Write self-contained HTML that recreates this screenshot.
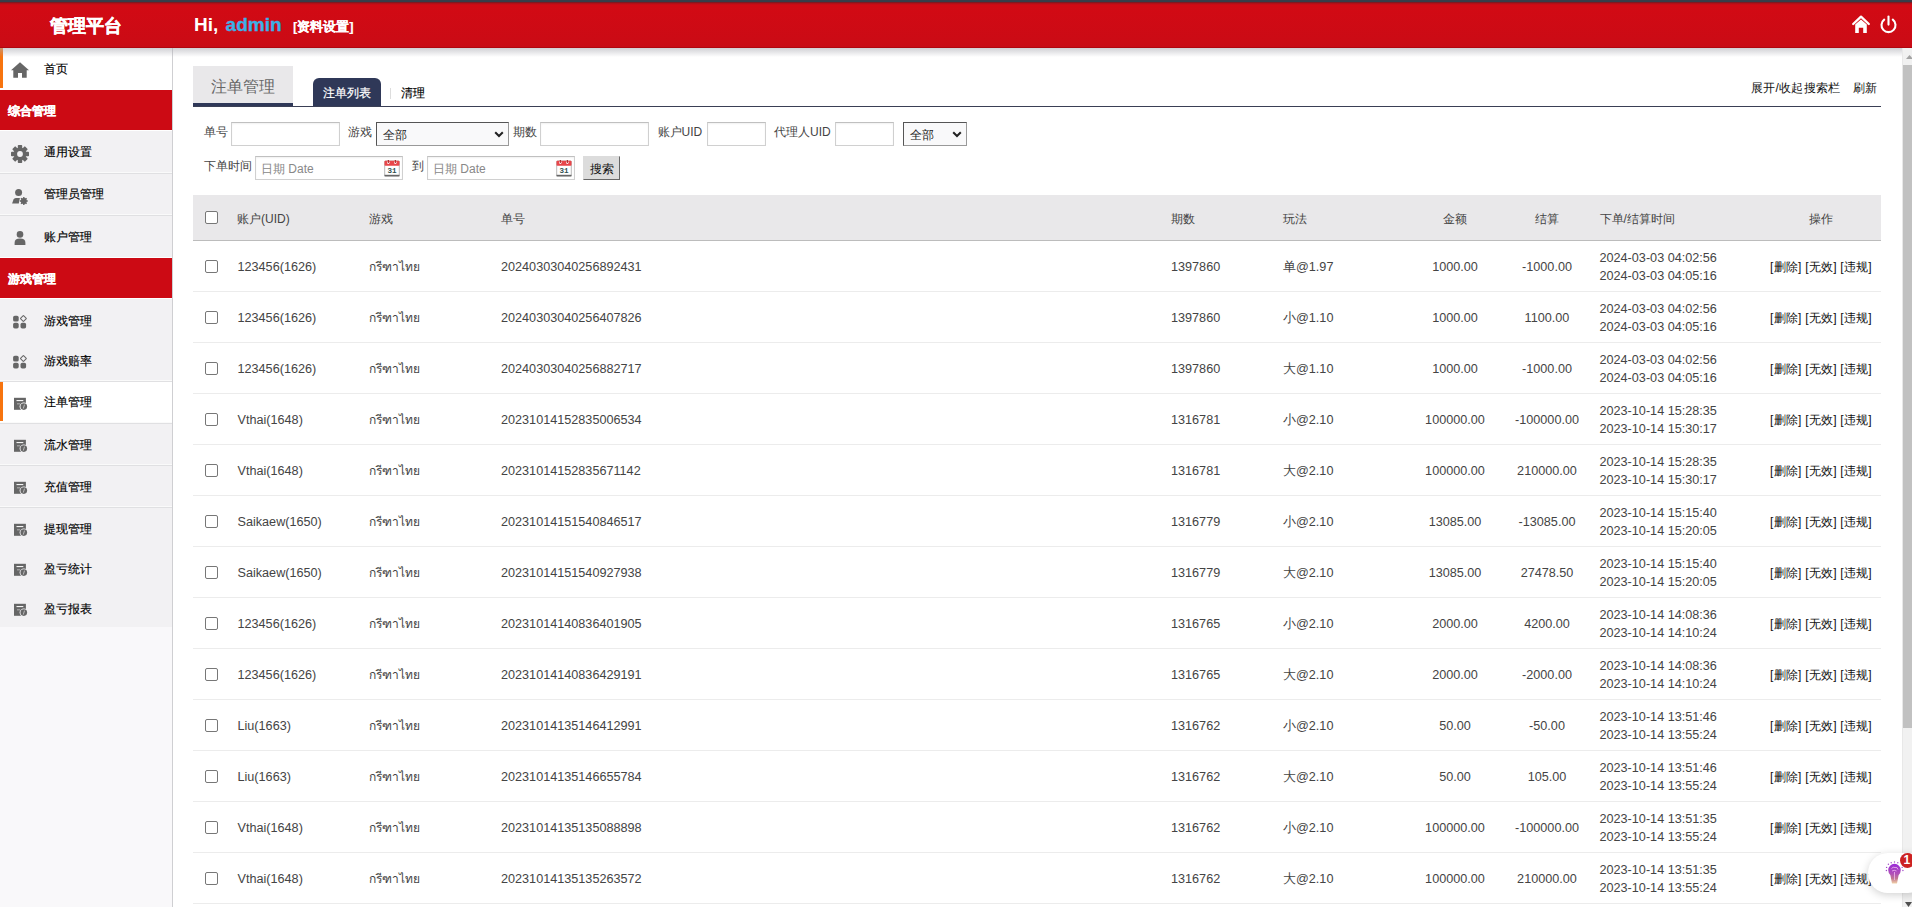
<!DOCTYPE html>
<html><head><meta charset="utf-8">
<style>
*{box-sizing:border-box;margin:0;padding:0}
html,body{width:1912px;height:907px;overflow:hidden;background:#fff}
body{font-family:"Liberation Sans",sans-serif;color:#333;position:relative}
.abs{position:absolute}
.t{position:absolute;white-space:nowrap;line-height:14px}
.side{font-size:12px;color:#000;-webkit-text-stroke:0.15px #000}
.sh{font-size:12px;font-weight:bold;color:#fff;-webkit-text-stroke:0.3px #fff}
.lbl{font-size:12px;color:#444}
.inp{position:absolute;border:1px solid #d0d0d0;border-top-color:#c0c0c0;background:#fff;box-shadow:inset 0 1px 2px rgba(0,0,0,0.06)}
.sel{position:absolute;border:1px solid #999;border-top-color:#555;border-left-color:#555;background:#f9f9fa}
.cell{font-size:12.65px;color:#444}
.hcell{font-size:12px;color:#444}
.cb{position:absolute;width:13px;height:13px;border:1px solid #777;border-radius:2px;background:#fff}
.rl{position:absolute;left:193px;width:1688px;height:1px;background:#ececec}
.ops{font-size:12px;letter-spacing:0.22px;color:#111}
</style></head><body>

<div class="abs" style="left:0;top:0;width:1912px;height:3px;background:#383d49"></div>
<div class="abs" style="left:0;top:2px;width:1912px;height:46px;background:linear-gradient(#6a1c24 0px,#b01018 1.5px,#d20a14 3px,#cb0b15 40px,#c70b16 46px)"></div>
<div class="t" style="left:50px;top:15px;font-size:18px;line-height:22px;font-weight:bold;color:#fff;-webkit-text-stroke:0.4px #fff">管理平台</div>
<div class="t" style="left:194px;top:13px;font-size:19px;line-height:24px;font-weight:bold;color:#fff">Hi, <span style="color:#3cb0e6;margin-left:2px;-webkit-text-stroke:0.35px #3cb0e6">admin</span></div>
<div class="t" style="left:293px;top:19px;font-size:13px;line-height:16px;font-weight:bold;color:#fff;-webkit-text-stroke:0.12px #fff">[资料设置]</div>
<svg class="abs" style="left:1851px;top:15px" width="20" height="19" viewBox="0 0 20 19"><path d="M2.2 9 L10 1.6 L17.8 9" fill="none" stroke="#fff" stroke-width="2.3" stroke-linecap="round" stroke-linejoin="round"/><path d="M4.2 9.6 L10 4.4 L15.8 9.6 V18 H12.2 V12.8 H7.8 V18 H4.2 Z" fill="#fff"/></svg>
<svg class="abs" style="left:1879px;top:15px" width="19" height="19" viewBox="0 0 19 19"><path d="M5.2 4.6 A7 7 0 1 0 13.8 4.6" fill="none" stroke="#fff" stroke-width="2.1" stroke-linecap="round"/><path d="M9.5 1.6 V9.6" stroke="#fff" stroke-width="2.1" stroke-linecap="round"/></svg>
<div class="abs" style="left:0;top:48px;width:173px;height:859px;background:#f9f8fa;border-right:1px solid #cfcfd2"></div>
<div class="abs" style="left:0;top:48px;width:172px;height:42px;background:#fff"></div>
<div class="abs" style="left:0;top:48px;width:3px;height:40px;background:#f7740f"></div>
<div class="t side" style="left:44px;top:61.5px">首页</div>
<div class="abs" style="left:0;top:89px;width:172px;height:1px;background:#fff"></div>
<div class="abs" style="left:0;top:90px;width:172px;height:40px;background:#cc0a14"></div>
<div class="abs" style="left:0;top:130px;width:172px;height:1px;background:#fff"></div>
<div class="t sh" style="left:8px;top:103.5px">综合管理</div>
<div class="abs" style="left:0;top:131px;width:172px;height:42px;background:#f2f1f3"></div>
<div class="abs" style="left:0;top:172px;width:172px;height:1px;background:#fafafa"></div>
<div class="abs" style="left:0;top:173px;width:172px;height:1px;background:#e0e0e2"></div>
<div class="t side" style="left:44px;top:145.4px">通用设置</div>
<div class="abs" style="left:0;top:174px;width:172px;height:41px;background:#f2f1f3"></div>
<div class="abs" style="left:0;top:214px;width:172px;height:1px;background:#fafafa"></div>
<div class="abs" style="left:0;top:215px;width:172px;height:1px;background:#e0e0e2"></div>
<div class="t side" style="left:44px;top:187.4px">管理员管理</div>
<div class="abs" style="left:0;top:216px;width:172px;height:41px;background:#f2f1f3"></div>
<div class="t side" style="left:44px;top:229.7px">账户管理</div>
<div class="abs" style="left:0;top:257px;width:172px;height:1px;background:#fff"></div>
<div class="abs" style="left:0;top:258px;width:172px;height:40px;background:#cc0a14"></div>
<div class="abs" style="left:0;top:298px;width:172px;height:1px;background:#fff"></div>
<div class="t sh" style="left:8px;top:271.5px">游戏管理</div>
<div class="abs" style="left:0;top:299px;width:172px;height:41px;background:#f2f1f3"></div>
<div class="t side" style="left:44px;top:313.5px">游戏管理</div>
<div class="abs" style="left:0;top:340px;width:172px;height:41px;background:#f2f1f3"></div>
<div class="abs" style="left:0;top:380px;width:172px;height:1px;background:#fafafa"></div>
<div class="abs" style="left:0;top:381px;width:172px;height:1px;background:#e0e0e2"></div>
<div class="t side" style="left:44px;top:353.6px">游戏赔率</div>
<div class="abs" style="left:0;top:382px;width:172px;height:41px;background:#fff"></div>
<div class="abs" style="left:0;top:382px;width:3px;height:39px;background:#f7740f"></div>
<div class="abs" style="left:0;top:422px;width:172px;height:1px;background:#fafafa"></div>
<div class="abs" style="left:0;top:423px;width:172px;height:1px;background:#e0e0e2"></div>
<div class="t side" style="left:44px;top:395.0px">注单管理</div>
<div class="abs" style="left:0;top:424px;width:172px;height:41px;background:#f2f1f3"></div>
<div class="abs" style="left:0;top:464px;width:172px;height:1px;background:#fafafa"></div>
<div class="abs" style="left:0;top:465px;width:172px;height:1px;background:#e0e0e2"></div>
<div class="t side" style="left:44px;top:438.0px">流水管理</div>
<div class="abs" style="left:0;top:466px;width:172px;height:41px;background:#f2f1f3"></div>
<div class="abs" style="left:0;top:506px;width:172px;height:1px;background:#fafafa"></div>
<div class="abs" style="left:0;top:507px;width:172px;height:1px;background:#e0e0e2"></div>
<div class="t side" style="left:44px;top:480.0px">充值管理</div>
<div class="abs" style="left:0;top:508px;width:172px;height:41px;background:#f2f1f3"></div>
<div class="t side" style="left:44px;top:522.0px">提现管理</div>
<div class="abs" style="left:0;top:549px;width:172px;height:40px;background:#f2f1f3"></div>
<div class="t side" style="left:44px;top:562.0px">盈亏统计</div>
<div class="abs" style="left:0;top:589px;width:172px;height:38px;background:#f2f1f3"></div>
<div class="t side" style="left:44px;top:602.0px">盈亏报表</div>
<svg class="abs" style="left:11px;top:62px" width="18" height="16" viewBox="0 0 18 16"><path d="M9 0.3 L0 8.3 L2.3 8.3 V15.8 H7 V11 H11 V15.8 H15.7 V8.3 H18 Z" fill="#666"/></svg>
<svg class="abs" style="left:11px;top:145px" width="18" height="18" viewBox="0 0 18 18"><g fill="#666"><circle cx="9" cy="9" r="6.4"/><rect x="6.8" y="0" width="4.4" height="18" rx="0.8"/><rect x="0" y="6.8" width="18" height="4.4" rx="0.8"/><rect x="6.8" y="0" width="4.4" height="18" rx="0.8" transform="rotate(45 9 9)"/><rect x="6.8" y="0" width="4.4" height="18" rx="0.8" transform="rotate(-45 9 9)"/></g><circle cx="9" cy="9" r="2.9" fill="#f2f1f3"/></svg>
<svg class="abs" style="left:12px;top:189px" width="17" height="16" viewBox="0 0 17 16"><g fill="#666"><circle cx="6.6" cy="3.6" r="3.5"/><path d="M0.1 14.6 L1.5 10.6 Q2.1 9.1 3.9 9.1 L7.9 9.1 L6.8 14.6 Z"/><g transform="translate(11.8 12)"><circle r="2.9"/><rect x="-0.8" y="-3.9" width="1.6" height="7.8"/><rect x="-3.9" y="-0.8" width="7.8" height="1.6"/><rect x="-0.8" y="-3.9" width="1.6" height="7.8" transform="rotate(45)"/><rect x="-0.8" y="-3.9" width="1.6" height="7.8" transform="rotate(-45)"/></g></g></svg>
<svg class="abs" style="left:13.5px;top:231px" width="12" height="14" viewBox="0 0 12 14"><g fill="#666"><circle cx="6" cy="3.4" r="3.3"/><path d="M0.6 14 V11.8 Q0.6 7.6 6 7.6 Q11.4 7.6 11.4 11.8 V14 Z"/></g></svg>
<svg class="abs" style="left:13px;top:315px" width="15" height="14" viewBox="0 0 15 14"><g fill="#666"><rect x="0.1" y="0.8" width="5.6" height="5.8" rx="1.7"/><rect x="0.1" y="7.8" width="5.6" height="5.6" rx="1.7"/><rect x="7.5" y="7.8" width="5.6" height="5.6" rx="1.7"/></g><rect x="8.2" y="1.3" width="4.4" height="4.4" rx="0.6" transform="rotate(45 10.4 3.5)" fill="none" stroke="#666" stroke-width="1"/></svg>
<svg class="abs" style="left:13px;top:355px" width="15" height="14" viewBox="0 0 15 14"><g fill="#666"><rect x="0.1" y="0.8" width="5.6" height="5.8" rx="1.7"/><rect x="0.1" y="7.8" width="5.6" height="5.6" rx="1.7"/><rect x="7.5" y="7.8" width="5.6" height="5.6" rx="1.7"/></g><rect x="8.2" y="1.3" width="4.4" height="4.4" rx="0.6" transform="rotate(45 10.4 3.5)" fill="none" stroke="#666" stroke-width="1"/></svg>
<svg class="abs" style="left:14px;top:397px" width="14" height="14" viewBox="0 0 14 14"><rect x="0" y="0.8" width="11.9" height="12" fill="#666"/><rect x="2.5" y="3" width="6.8" height="1.1" fill="#f4f4f4"/><rect x="3" y="6.2" width="3" height="1.2" fill="#a8a8a8"/><circle cx="9.8" cy="9.6" r="4.2" fill="#fff"/><circle cx="9.8" cy="9.6" r="3.3" fill="#666"/><path d="M10.5 7.6 L9.3 11.6" stroke="#bdbdbd" stroke-width="1"/></svg>
<svg class="abs" style="left:14px;top:439px" width="14" height="14" viewBox="0 0 14 14"><rect x="0" y="0.8" width="11.9" height="12" fill="#666"/><rect x="2.5" y="3" width="6.8" height="1.1" fill="#f4f4f4"/><rect x="3" y="6.2" width="3" height="1.2" fill="#a8a8a8"/><circle cx="9.8" cy="9.6" r="4.2" fill="#f2f1f3"/><circle cx="9.8" cy="9.6" r="3.3" fill="#666"/><path d="M10.5 7.6 L9.3 11.6" stroke="#bdbdbd" stroke-width="1"/></svg>
<svg class="abs" style="left:14px;top:481px" width="14" height="14" viewBox="0 0 14 14"><rect x="0" y="0.8" width="11.9" height="12" fill="#666"/><rect x="2.5" y="3" width="6.8" height="1.1" fill="#f4f4f4"/><rect x="3" y="6.2" width="3" height="1.2" fill="#a8a8a8"/><circle cx="9.8" cy="9.6" r="4.2" fill="#f2f1f3"/><circle cx="9.8" cy="9.6" r="3.3" fill="#666"/><path d="M10.5 7.6 L9.3 11.6" stroke="#bdbdbd" stroke-width="1"/></svg>
<svg class="abs" style="left:14px;top:523px" width="14" height="14" viewBox="0 0 14 14"><rect x="0" y="0.8" width="11.9" height="12" fill="#666"/><rect x="2.5" y="3" width="6.8" height="1.1" fill="#f4f4f4"/><rect x="3" y="6.2" width="3" height="1.2" fill="#a8a8a8"/><circle cx="9.8" cy="9.6" r="4.2" fill="#f2f1f3"/><circle cx="9.8" cy="9.6" r="3.3" fill="#666"/><path d="M10.5 7.6 L9.3 11.6" stroke="#bdbdbd" stroke-width="1"/></svg>
<svg class="abs" style="left:14px;top:563px" width="14" height="14" viewBox="0 0 14 14"><rect x="0" y="0.8" width="11.9" height="12" fill="#666"/><rect x="2.5" y="3" width="6.8" height="1.1" fill="#f4f4f4"/><rect x="3" y="6.2" width="3" height="1.2" fill="#a8a8a8"/><circle cx="9.8" cy="9.6" r="4.2" fill="#f2f1f3"/><circle cx="9.8" cy="9.6" r="3.3" fill="#666"/><path d="M10.5 7.6 L9.3 11.6" stroke="#bdbdbd" stroke-width="1"/></svg>
<svg class="abs" style="left:14px;top:603px" width="14" height="14" viewBox="0 0 14 14"><rect x="0" y="0.8" width="11.9" height="12" fill="#666"/><rect x="2.5" y="3" width="6.8" height="1.1" fill="#f4f4f4"/><rect x="3" y="6.2" width="3" height="1.2" fill="#a8a8a8"/><circle cx="9.8" cy="9.6" r="4.2" fill="#f2f1f3"/><circle cx="9.8" cy="9.6" r="3.3" fill="#666"/><path d="M10.5 7.6 L9.3 11.6" stroke="#bdbdbd" stroke-width="1"/></svg>
<div class="abs" style="left:0;top:48px;width:1902px;height:9px;background:linear-gradient(rgba(170,170,178,0.55),rgba(255,255,255,0))"></div>
<div class="abs" style="left:0;top:47px;width:1912px;height:1px;background:#b0060f"></div>
<div class="abs" style="left:193px;top:66px;width:100px;height:37px;background:#e9e8ea"></div>
<div class="abs" style="left:193px;top:103px;width:100px;height:4px;background:#2f3858"></div>
<div class="t" style="left:211px;top:78px;font-size:16px;line-height:18px;color:#666">注单管理</div>
<div class="abs" style="left:313px;top:78px;width:68px;height:29px;background:#2f3858;border-radius:6px 6px 0 0"></div>
<div class="t" style="left:323px;top:85.5px;font-size:12px;color:#fff;-webkit-text-stroke:0.2px #fff">注单列表</div>
<div class="abs" style="left:390px;top:88px;width:1px;height:11px;background:#ddd"></div>
<div class="t" style="left:400.5px;top:85.5px;font-size:12px;color:#000;-webkit-text-stroke:0.15px #000">清理</div>
<div class="abs" style="left:193px;top:106px;width:1688px;height:1px;background:#3a3f55"></div>
<div class="t" style="left:1751px;top:81px;font-size:12px;color:#111;letter-spacing:0.25px">展开/收起搜索栏</div>
<div class="t" style="left:1853px;top:81px;font-size:12px;color:#111">刷新</div>
<div class="t lbl" style="left:203.5px;top:125px">单号</div>
<div class="inp" style="left:231px;top:122px;width:109px;height:24px"></div>
<div class="t lbl" style="left:348px;top:125px">游戏</div>
<div class="sel" style="left:376px;top:122px;width:133px;height:24px"><div class="t" style="left:6px;top:4.5px;font-size:12px;color:#222">全部</div><svg class="abs" style="right:4px;top:8px" width="10" height="7" viewBox="0 0 10 7"><path d="M1.2 1.2 L5 5 L8.8 1.2" fill="none" stroke="#222" stroke-width="2"/></svg></div>
<div class="t lbl" style="left:512.5px;top:125px">期数</div>
<div class="inp" style="left:540px;top:122px;width:109px;height:24px"></div>
<div class="t lbl" style="left:657.5px;top:125px">账户UID</div>
<div class="inp" style="left:707px;top:122px;width:59px;height:24px"></div>
<div class="t lbl" style="left:774px;top:125px">代理人UID</div>
<div class="inp" style="left:835px;top:122px;width:59px;height:24px"></div>
<div class="sel" style="left:903px;top:122px;width:64px;height:24px"><div class="t" style="left:6px;top:4.5px;font-size:12px;color:#222">全部</div><svg class="abs" style="right:4px;top:8px" width="10" height="7" viewBox="0 0 10 7"><path d="M1.2 1.2 L5 5 L8.8 1.2" fill="none" stroke="#222" stroke-width="2"/></svg></div>
<div class="t lbl" style="left:203.5px;top:159px">下单时间</div>
<div class="inp" style="left:255px;top:156px;width:148px;height:24px"></div>
<svg class="abs" style="left:384px;top:159.5px" width="16" height="17" viewBox="0 0 16 17"><rect x="0.7" y="1" width="14.6" height="15" rx="0.8" fill="#fff" stroke="#b9b9b9" stroke-width="1"/><rect x="0.5" y="14.8" width="15" height="1.6" fill="#666"/><rect x="0.5" y="0.8" width="15" height="5" rx="0.8" fill="#e8464a"/><circle cx="4.3" cy="2.6" r="1.3" fill="#fff"/><circle cx="11.3" cy="2.6" r="1.3" fill="#fff"/><rect x="3.8" y="0" width="1" height="3" fill="#a01010"/><rect x="10.8" y="0" width="1" height="3" fill="#a01010"/><text x="8" y="12.8" font-size="7.6" text-anchor="middle" fill="#2f4f4f" font-family="Liberation Mono" font-weight="bold">31</text></svg>
<div class="t" style="left:261px;top:161.5px;font-size:12px;color:#888">日期 Date</div>
<div class="t lbl" style="left:411.5px;top:159px">到</div>
<div class="inp" style="left:427px;top:156px;width:148px;height:24px"></div>
<svg class="abs" style="left:556px;top:159.5px" width="16" height="17" viewBox="0 0 16 17"><rect x="0.7" y="1" width="14.6" height="15" rx="0.8" fill="#fff" stroke="#b9b9b9" stroke-width="1"/><rect x="0.5" y="14.8" width="15" height="1.6" fill="#666"/><rect x="0.5" y="0.8" width="15" height="5" rx="0.8" fill="#e8464a"/><circle cx="4.3" cy="2.6" r="1.3" fill="#fff"/><circle cx="11.3" cy="2.6" r="1.3" fill="#fff"/><rect x="3.8" y="0" width="1" height="3" fill="#a01010"/><rect x="10.8" y="0" width="1" height="3" fill="#a01010"/><text x="8" y="12.8" font-size="7.6" text-anchor="middle" fill="#2f4f4f" font-family="Liberation Mono" font-weight="bold">31</text></svg>
<div class="t" style="left:433px;top:161.5px;font-size:12px;color:#888">日期 Date</div>
<div class="abs" style="left:583px;top:156px;width:37px;height:24px;background:#dcdcdc;border:1px solid #dcdcdc;border-right:1.5px solid #666;border-bottom:1.5px solid #666"></div>
<div class="t" style="left:589.5px;top:162px;font-size:12px;color:#111">搜索</div>
<div class="abs" style="left:193px;top:195px;width:1688px;height:45px;background:#e9e8ea"></div>
<div class="abs" style="left:193px;top:240px;width:1688px;height:1px;background:#bcbcbc"></div>
<div class="cb" style="left:205px;top:211px"></div>
<div class="t hcell" style="left:237px;top:211.5px">账户(UID)</div>
<div class="t hcell" style="left:369px;top:211.5px">游戏</div>
<div class="t hcell" style="left:501px;top:211.5px">单号</div>
<div class="t hcell" style="left:1171px;top:211.5px">期数</div>
<div class="t hcell" style="left:1283px;top:211.5px">玩法</div>
<div class="t hcell" style="left:1355px;top:211.5px;width:200px;text-align:center">金额</div>
<div class="t hcell" style="left:1447px;top:211.5px;width:200px;text-align:center">结算</div>
<div class="t hcell" style="left:1599.5px;top:211.5px">下单/结算时间</div>
<div class="t hcell" style="left:1721px;top:211.5px;width:200px;text-align:center">操作</div>
<div class="cb" style="left:205px;top:260px"></div>
<div class="t cell" style="left:237.5px;top:259.5px">123456(1626)</div>
<div class="t cell" style="left:369px;top:259.5px;font-size:12px">กรีฑาไทย</div>
<div class="t cell" style="left:501px;top:259.5px">20240303040256892431</div>
<div class="t cell" style="left:1171px;top:259.5px">1397860</div>
<div class="t cell" style="left:1283px;top:259.5px">单@1.97</div>
<div class="t cell" style="left:1355px;top:259.5px;width:200px;text-align:center">1000.00</div>
<div class="t cell" style="left:1447px;top:259.5px;width:200px;text-align:center">-1000.00</div>
<div class="t cell" style="left:1599.5px;top:250.5px;font-size:12.65px">2024-03-03 04:02:56</div>
<div class="t cell" style="left:1599.5px;top:268.5px;font-size:12.65px">2024-03-03 04:05:16</div>
<div class="t ops" style="left:1721px;top:259.5px;width:200px;text-align:center">[删除] [无效] [违规]</div>
<div class="rl" style="top:291px"></div>
<div class="cb" style="left:205px;top:311px"></div>
<div class="t cell" style="left:237.5px;top:310.5px">123456(1626)</div>
<div class="t cell" style="left:369px;top:310.5px;font-size:12px">กรีฑาไทย</div>
<div class="t cell" style="left:501px;top:310.5px">20240303040256407826</div>
<div class="t cell" style="left:1171px;top:310.5px">1397860</div>
<div class="t cell" style="left:1283px;top:310.5px">小@1.10</div>
<div class="t cell" style="left:1355px;top:310.5px;width:200px;text-align:center">1000.00</div>
<div class="t cell" style="left:1447px;top:310.5px;width:200px;text-align:center">1100.00</div>
<div class="t cell" style="left:1599.5px;top:301.5px;font-size:12.65px">2024-03-03 04:02:56</div>
<div class="t cell" style="left:1599.5px;top:319.5px;font-size:12.65px">2024-03-03 04:05:16</div>
<div class="t ops" style="left:1721px;top:310.5px;width:200px;text-align:center">[删除] [无效] [违规]</div>
<div class="rl" style="top:342px"></div>
<div class="cb" style="left:205px;top:362px"></div>
<div class="t cell" style="left:237.5px;top:361.5px">123456(1626)</div>
<div class="t cell" style="left:369px;top:361.5px;font-size:12px">กรีฑาไทย</div>
<div class="t cell" style="left:501px;top:361.5px">20240303040256882717</div>
<div class="t cell" style="left:1171px;top:361.5px">1397860</div>
<div class="t cell" style="left:1283px;top:361.5px">大@1.10</div>
<div class="t cell" style="left:1355px;top:361.5px;width:200px;text-align:center">1000.00</div>
<div class="t cell" style="left:1447px;top:361.5px;width:200px;text-align:center">-1000.00</div>
<div class="t cell" style="left:1599.5px;top:352.5px;font-size:12.65px">2024-03-03 04:02:56</div>
<div class="t cell" style="left:1599.5px;top:370.5px;font-size:12.65px">2024-03-03 04:05:16</div>
<div class="t ops" style="left:1721px;top:361.5px;width:200px;text-align:center">[删除] [无效] [违规]</div>
<div class="rl" style="top:393px"></div>
<div class="cb" style="left:205px;top:413px"></div>
<div class="t cell" style="left:237.5px;top:412.5px">Vthai(1648)</div>
<div class="t cell" style="left:369px;top:412.5px;font-size:12px">กรีฑาไทย</div>
<div class="t cell" style="left:501px;top:412.5px">20231014152835006534</div>
<div class="t cell" style="left:1171px;top:412.5px">1316781</div>
<div class="t cell" style="left:1283px;top:412.5px">小@2.10</div>
<div class="t cell" style="left:1355px;top:412.5px;width:200px;text-align:center">100000.00</div>
<div class="t cell" style="left:1447px;top:412.5px;width:200px;text-align:center">-100000.00</div>
<div class="t cell" style="left:1599.5px;top:403.5px;font-size:12.65px">2023-10-14 15:28:35</div>
<div class="t cell" style="left:1599.5px;top:421.5px;font-size:12.65px">2023-10-14 15:30:17</div>
<div class="t ops" style="left:1721px;top:412.5px;width:200px;text-align:center">[删除] [无效] [违规]</div>
<div class="rl" style="top:444px"></div>
<div class="cb" style="left:205px;top:464px"></div>
<div class="t cell" style="left:237.5px;top:463.5px">Vthai(1648)</div>
<div class="t cell" style="left:369px;top:463.5px;font-size:12px">กรีฑาไทย</div>
<div class="t cell" style="left:501px;top:463.5px">20231014152835671142</div>
<div class="t cell" style="left:1171px;top:463.5px">1316781</div>
<div class="t cell" style="left:1283px;top:463.5px">大@2.10</div>
<div class="t cell" style="left:1355px;top:463.5px;width:200px;text-align:center">100000.00</div>
<div class="t cell" style="left:1447px;top:463.5px;width:200px;text-align:center">210000.00</div>
<div class="t cell" style="left:1599.5px;top:454.5px;font-size:12.65px">2023-10-14 15:28:35</div>
<div class="t cell" style="left:1599.5px;top:472.5px;font-size:12.65px">2023-10-14 15:30:17</div>
<div class="t ops" style="left:1721px;top:463.5px;width:200px;text-align:center">[删除] [无效] [违规]</div>
<div class="rl" style="top:495px"></div>
<div class="cb" style="left:205px;top:515px"></div>
<div class="t cell" style="left:237.5px;top:514.5px">Saikaew(1650)</div>
<div class="t cell" style="left:369px;top:514.5px;font-size:12px">กรีฑาไทย</div>
<div class="t cell" style="left:501px;top:514.5px">20231014151540846517</div>
<div class="t cell" style="left:1171px;top:514.5px">1316779</div>
<div class="t cell" style="left:1283px;top:514.5px">小@2.10</div>
<div class="t cell" style="left:1355px;top:514.5px;width:200px;text-align:center">13085.00</div>
<div class="t cell" style="left:1447px;top:514.5px;width:200px;text-align:center">-13085.00</div>
<div class="t cell" style="left:1599.5px;top:505.5px;font-size:12.65px">2023-10-14 15:15:40</div>
<div class="t cell" style="left:1599.5px;top:523.5px;font-size:12.65px">2023-10-14 15:20:05</div>
<div class="t ops" style="left:1721px;top:514.5px;width:200px;text-align:center">[删除] [无效] [违规]</div>
<div class="rl" style="top:546px"></div>
<div class="cb" style="left:205px;top:566px"></div>
<div class="t cell" style="left:237.5px;top:565.5px">Saikaew(1650)</div>
<div class="t cell" style="left:369px;top:565.5px;font-size:12px">กรีฑาไทย</div>
<div class="t cell" style="left:501px;top:565.5px">20231014151540927938</div>
<div class="t cell" style="left:1171px;top:565.5px">1316779</div>
<div class="t cell" style="left:1283px;top:565.5px">大@2.10</div>
<div class="t cell" style="left:1355px;top:565.5px;width:200px;text-align:center">13085.00</div>
<div class="t cell" style="left:1447px;top:565.5px;width:200px;text-align:center">27478.50</div>
<div class="t cell" style="left:1599.5px;top:556.5px;font-size:12.65px">2023-10-14 15:15:40</div>
<div class="t cell" style="left:1599.5px;top:574.5px;font-size:12.65px">2023-10-14 15:20:05</div>
<div class="t ops" style="left:1721px;top:565.5px;width:200px;text-align:center">[删除] [无效] [违规]</div>
<div class="rl" style="top:597px"></div>
<div class="cb" style="left:205px;top:617px"></div>
<div class="t cell" style="left:237.5px;top:616.5px">123456(1626)</div>
<div class="t cell" style="left:369px;top:616.5px;font-size:12px">กรีฑาไทย</div>
<div class="t cell" style="left:501px;top:616.5px">20231014140836401905</div>
<div class="t cell" style="left:1171px;top:616.5px">1316765</div>
<div class="t cell" style="left:1283px;top:616.5px">小@2.10</div>
<div class="t cell" style="left:1355px;top:616.5px;width:200px;text-align:center">2000.00</div>
<div class="t cell" style="left:1447px;top:616.5px;width:200px;text-align:center">4200.00</div>
<div class="t cell" style="left:1599.5px;top:607.5px;font-size:12.65px">2023-10-14 14:08:36</div>
<div class="t cell" style="left:1599.5px;top:625.5px;font-size:12.65px">2023-10-14 14:10:24</div>
<div class="t ops" style="left:1721px;top:616.5px;width:200px;text-align:center">[删除] [无效] [违规]</div>
<div class="rl" style="top:648px"></div>
<div class="cb" style="left:205px;top:668px"></div>
<div class="t cell" style="left:237.5px;top:667.5px">123456(1626)</div>
<div class="t cell" style="left:369px;top:667.5px;font-size:12px">กรีฑาไทย</div>
<div class="t cell" style="left:501px;top:667.5px">20231014140836429191</div>
<div class="t cell" style="left:1171px;top:667.5px">1316765</div>
<div class="t cell" style="left:1283px;top:667.5px">大@2.10</div>
<div class="t cell" style="left:1355px;top:667.5px;width:200px;text-align:center">2000.00</div>
<div class="t cell" style="left:1447px;top:667.5px;width:200px;text-align:center">-2000.00</div>
<div class="t cell" style="left:1599.5px;top:658.5px;font-size:12.65px">2023-10-14 14:08:36</div>
<div class="t cell" style="left:1599.5px;top:676.5px;font-size:12.65px">2023-10-14 14:10:24</div>
<div class="t ops" style="left:1721px;top:667.5px;width:200px;text-align:center">[删除] [无效] [违规]</div>
<div class="rl" style="top:699px"></div>
<div class="cb" style="left:205px;top:719px"></div>
<div class="t cell" style="left:237.5px;top:718.5px">Liu(1663)</div>
<div class="t cell" style="left:369px;top:718.5px;font-size:12px">กรีฑาไทย</div>
<div class="t cell" style="left:501px;top:718.5px">20231014135146412991</div>
<div class="t cell" style="left:1171px;top:718.5px">1316762</div>
<div class="t cell" style="left:1283px;top:718.5px">小@2.10</div>
<div class="t cell" style="left:1355px;top:718.5px;width:200px;text-align:center">50.00</div>
<div class="t cell" style="left:1447px;top:718.5px;width:200px;text-align:center">-50.00</div>
<div class="t cell" style="left:1599.5px;top:709.5px;font-size:12.65px">2023-10-14 13:51:46</div>
<div class="t cell" style="left:1599.5px;top:727.5px;font-size:12.65px">2023-10-14 13:55:24</div>
<div class="t ops" style="left:1721px;top:718.5px;width:200px;text-align:center">[删除] [无效] [违规]</div>
<div class="rl" style="top:750px"></div>
<div class="cb" style="left:205px;top:770px"></div>
<div class="t cell" style="left:237.5px;top:769.5px">Liu(1663)</div>
<div class="t cell" style="left:369px;top:769.5px;font-size:12px">กรีฑาไทย</div>
<div class="t cell" style="left:501px;top:769.5px">20231014135146655784</div>
<div class="t cell" style="left:1171px;top:769.5px">1316762</div>
<div class="t cell" style="left:1283px;top:769.5px">大@2.10</div>
<div class="t cell" style="left:1355px;top:769.5px;width:200px;text-align:center">50.00</div>
<div class="t cell" style="left:1447px;top:769.5px;width:200px;text-align:center">105.00</div>
<div class="t cell" style="left:1599.5px;top:760.5px;font-size:12.65px">2023-10-14 13:51:46</div>
<div class="t cell" style="left:1599.5px;top:778.5px;font-size:12.65px">2023-10-14 13:55:24</div>
<div class="t ops" style="left:1721px;top:769.5px;width:200px;text-align:center">[删除] [无效] [违规]</div>
<div class="rl" style="top:801px"></div>
<div class="cb" style="left:205px;top:821px"></div>
<div class="t cell" style="left:237.5px;top:820.5px">Vthai(1648)</div>
<div class="t cell" style="left:369px;top:820.5px;font-size:12px">กรีฑาไทย</div>
<div class="t cell" style="left:501px;top:820.5px">20231014135135088898</div>
<div class="t cell" style="left:1171px;top:820.5px">1316762</div>
<div class="t cell" style="left:1283px;top:820.5px">小@2.10</div>
<div class="t cell" style="left:1355px;top:820.5px;width:200px;text-align:center">100000.00</div>
<div class="t cell" style="left:1447px;top:820.5px;width:200px;text-align:center">-100000.00</div>
<div class="t cell" style="left:1599.5px;top:811.5px;font-size:12.65px">2023-10-14 13:51:35</div>
<div class="t cell" style="left:1599.5px;top:829.5px;font-size:12.65px">2023-10-14 13:55:24</div>
<div class="t ops" style="left:1721px;top:820.5px;width:200px;text-align:center">[删除] [无效] [违规]</div>
<div class="rl" style="top:852px"></div>
<div class="cb" style="left:205px;top:872px"></div>
<div class="t cell" style="left:237.5px;top:871.5px">Vthai(1648)</div>
<div class="t cell" style="left:369px;top:871.5px;font-size:12px">กรีฑาไทย</div>
<div class="t cell" style="left:501px;top:871.5px">20231014135135263572</div>
<div class="t cell" style="left:1171px;top:871.5px">1316762</div>
<div class="t cell" style="left:1283px;top:871.5px">大@2.10</div>
<div class="t cell" style="left:1355px;top:871.5px;width:200px;text-align:center">100000.00</div>
<div class="t cell" style="left:1447px;top:871.5px;width:200px;text-align:center">210000.00</div>
<div class="t cell" style="left:1599.5px;top:862.5px;font-size:12.65px">2023-10-14 13:51:35</div>
<div class="t cell" style="left:1599.5px;top:880.5px;font-size:12.65px">2023-10-14 13:55:24</div>
<div class="t ops" style="left:1721px;top:871.5px;width:200px;text-align:center">[删除] [无效] [违规]</div>
<div class="rl" style="top:903px"></div>
<div class="abs" style="left:1902px;top:48px;width:10px;height:859px;background:#f1f1f1;border-left:1px solid #e8e8e8"></div>
<div class="abs" style="left:1903px;top:65px;width:9px;height:663px;background:#c1c1c1"></div>
<svg class="abs" style="left:1906px;top:55px" width="7" height="4" viewBox="0 0 7 4"><path d="M0 4 L3.5 0 L7 4 Z" fill="#a3a3a3"/></svg>
<svg class="abs" style="left:1905px;top:902px" width="7" height="5" viewBox="0 0 7 5"><path d="M0 0 L3.5 5 L7 0 Z" fill="#505050"/></svg>
<div class="abs" style="left:1868px;top:853px;width:60px;height:40px;background:#fff;border-radius:20px;box-shadow:0 2px 8px rgba(0,0,0,0.18)"></div>
<svg class="abs" style="left:1884px;top:860px" width="22" height="25" viewBox="0 0 22 25"><defs><linearGradient id="bg" x1="0" y1="0" x2="0" y2="1"><stop offset="0" stop-color="#9a2ad8"/><stop offset="0.5" stop-color="#b050b8"/><stop offset="0.75" stop-color="#c07a90"/><stop offset="1" stop-color="#f2d0a8"/></linearGradient></defs><path d="M10.5 3.8 A6.3 6.3 0 0 1 16.8 10.1 Q16.8 13 14.6 15.2 L13 23.5 H8 L6.4 15.2 Q4.2 13 4.2 10.1 A6.3 6.3 0 0 1 10.5 3.8 Z" fill="url(#bg)"/><path d="M7.5 8.5 Q9 6.5 11 7.5 Q13.5 6.8 14 9.5 M8 11 Q10 9.5 12.5 11 M10.5 12 V20" fill="none" stroke="#f0b8f0" stroke-width="1" opacity="0.8"/><g fill="#a050c8"><circle cx="2.4" cy="10.5" r="0.7"/><circle cx="2.6" cy="7.4" r="0.7"/><circle cx="4.4" cy="4.3" r="0.7"/><circle cx="7.2" cy="2.8" r="0.7"/><circle cx="10.5" cy="2" r="0.7"/><circle cx="13.8" cy="2.8" r="0.7"/><circle cx="18.2" cy="7.4" r="0.7"/><circle cx="18.9" cy="10.5" r="0.7"/></g></svg>
<div class="abs" style="left:1900px;top:853px;width:15px;height:15px;border-radius:50%;background:#cc2222"></div>
<div class="t" style="left:1903.5px;top:854px;font-size:12px;line-height:13px;font-weight:bold;color:#fff">1</div>
</body></html>
